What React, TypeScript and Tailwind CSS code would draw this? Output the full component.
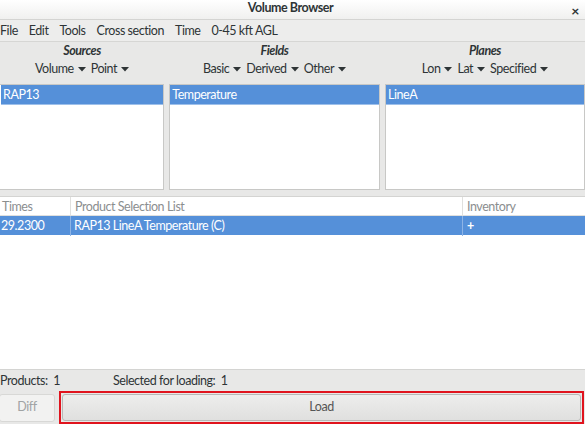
import { ReactNode } from "react";

const font = { fontFamily: 'Lato, "Noto Sans", sans-serif', letterSpacing: "-0.45px" };

function Drop({ label }: { label: string }) {
  return (
    <span className="flex items-center gap-[4px]">
      {label}
      <svg width="8" height="5" viewBox="0 0 8 5">
        <path d="M0 0 L8 0 L4 4.5 Z" fill="#2e3436" />
      </svg>
    </span>
  );
}

function ListBox({ item, className }: { item: string; className: string }) {
  return (
    <div className={`bg-white border border-[#c8c8c6] h-[106px] ${className}`}>
      <div className="h-[20px] bg-[#5590d9] text-white pl-[2px] leading-[20px] border-b border-[#9ec0ea]">{item}</div>
    </div>
  );
}

function Col({ title, children }: { title: string; children: ReactNode }) {
  return (
    <div className="flex flex-col items-center">
      <div className="h-[16px] leading-[16px] font-bold italic text-[#2e3436]">{title}</div>
      <div className="h-[20px] flex items-center gap-[5px] text-[#2e3436]">{children}</div>
    </div>
  );
}

export default function App() {
  return (
    <div className="w-[585px] h-[424px] bg-[#e8e8e7] text-[12.5px] text-[#2e3436] overflow-hidden flex flex-col" style={font}>
      {/* title bar */}
      <div className="h-[20px] shrink-0 bg-gradient-to-b from-white to-[#f0f0ef] border-b border-[#d4d4d2] relative flex items-center justify-center">
        <span className="font-bold text-[12.5px] text-[#2e3436] -ml-[4px] -mt-[2px]">Volume Browser</span>
        <span className="absolute right-[6px] top-[0px] text-[14px] font-bold text-[#2e3436]">×</span>
      </div>
      {/* menu */}
      <div className="h-[22px] shrink-0 bg-[#ededec] border-b border-[#d6d6d4] flex items-center gap-[11px] pt-[2px]">
        <span>File</span>
        <span>Edit</span>
        <span>Tools</span>
        <span>Cross section</span>
        <span>Time</span>
        <span>0-45 kft AGL</span>
      </div>
      {/* selectors */}
      <div className="grid grid-cols-[164px_221px_200px] shrink-0 pt-[1px]">
        <Col title="Sources">
          <Drop label="Volume" />
          <Drop label="Point" />
        </Col>
        <Col title="Fields">
          <Drop label="Basic" />
          <Drop label="Derived" />
          <Drop label="Other" />
        </Col>
        <Col title="Planes">
          <Drop label="Lon" />
          <Drop label="Lat" />
          <Drop label="Specified" />
        </Col>
      </div>
      <div className="flex gap-[5px] mt-[5px] -ml-[2px] shrink-0">
        <ListBox item="RAP13" className="w-[168px] pl-[2px]" />
        <ListBox item="Temperature" className="w-[213px]" />
        <ListBox item="LineA" className="w-[202px]" />
      </div>
      {/* table */}
      <div className="mt-[6px] bg-white h-[173px] shrink-0 border-t border-[#d4d4d2]">
        <div className="grid grid-cols-[70px_392px_1fr] h-[19px] text-[#8b8e8f] border-b border-[#e0e0de]">
          <div className="pl-[2px] leading-[19px]">Times</div>
          <div className="pl-[4px] leading-[19px] border-l border-[#e0e0de]">Product Selection List</div>
          <div className="pl-[4px] leading-[19px] border-l border-[#e0e0de]">Inventory</div>
        </div>
        <div className="grid grid-cols-[70px_392px_1fr] h-[19px] bg-[#5590d9] text-white">
          <div className="pl-[1px] leading-[20px]">29.2300</div>
          <div className="pl-[3px] leading-[20px] border-l border-[#8db4e6]">RAP13 LineA Temperature (C)</div>
          <div className="pl-[4px] leading-[19px] border-l border-[#8db4e6] font-bold">+</div>
        </div>
      </div>
      {/* status */}
      <div className="h-[22px] shrink-0 border-t border-[#d4d4d2] flex items-center pt-[1px]">
        <span className="w-[113px]">Products:&nbsp; 1</span>
        <span>Selected for loading:&nbsp; 1</span>
      </div>
      {/* buttons */}
      <div className="flex items-center h-[33px] gap-[4px] shrink-0">
        <div className="w-[56px] h-[28px] -ml-[1px] bg-[#f2f2f1] border border-[#d8d8d6] rounded-[3px] flex items-center justify-center text-[#a0a3a4]">Diff</div>
        <div className="flex-1 h-[33px] border-[2px] border-[#e0141e] p-[1px] mr-[1px]">
          <div className="h-full bg-gradient-to-b from-[#ededec] to-[#e0e0df] border border-[#b8b8b6] rounded-[3px] flex items-center justify-center text-[#555]">Load</div>
        </div>
      </div>
    </div>
  );
}
